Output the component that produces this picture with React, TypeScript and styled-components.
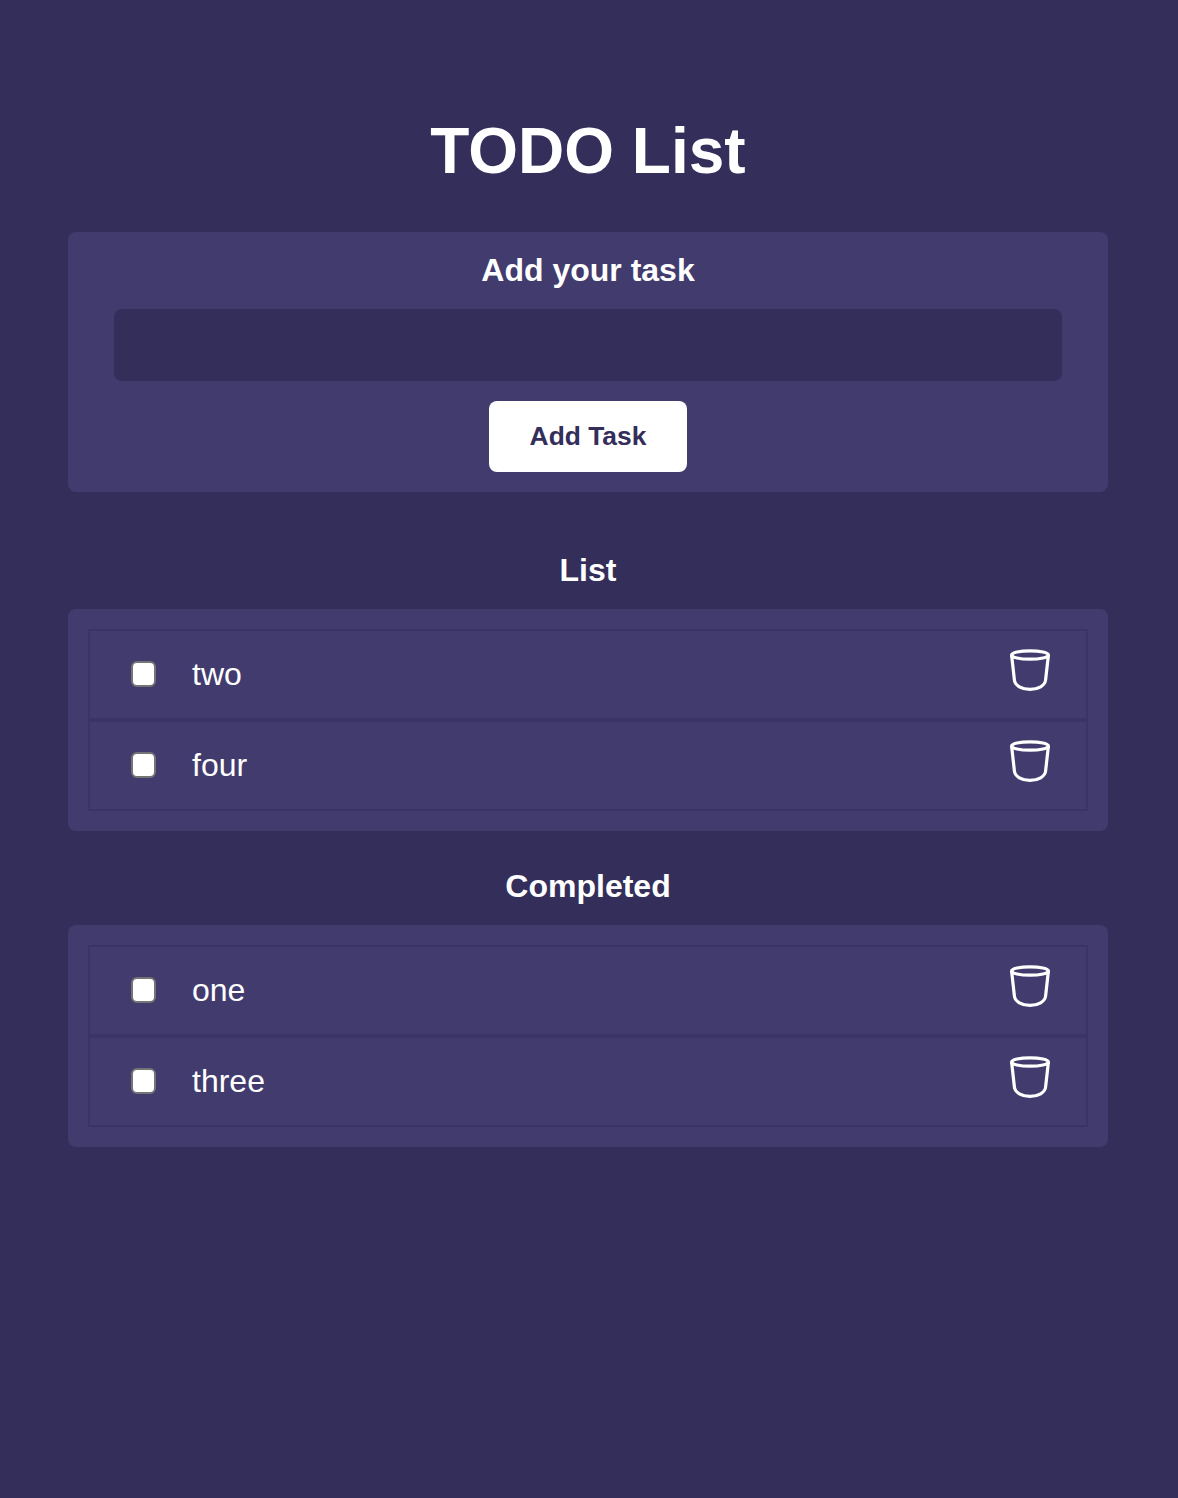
import React, { FC } from "react";
import styled, { createGlobalStyle } from "styled-components";

const GlobalStyle = createGlobalStyle`
  html, body {
    margin: 0;
    padding: 0;
    background: #342e5a;
  }
  body {
    font-family: "Liberation Sans", Arial, sans-serif;
    color: #fff;
  }
`;

const Page = styled.div`
  box-sizing: border-box;
  min-height: 1498px;
  width: 1176px;
  padding: 115px 68px 0;
`;

const Title = styled.h1`
  margin: 0 0 44px;
  height: 73px;
  line-height: 73px;
  font-size: 64px;
  font-weight: 700;
  text-align: center;
`;

const Card = styled.div`
  background: #423b6e;
  border-radius: 8px;
`;

const FormCard = styled(Card)`
  display: flex;
  flex-direction: column;
  align-items: center;
  padding: 20px 46px;
  margin-bottom: 60px;
`;

const FormTitle = styled.h2`
  margin: 0 0 20px;
  line-height: 37px;
  font-size: 32px;
  font-weight: 700;
`;

const TaskInput = styled.input`
  box-sizing: border-box;
  display: block;
  width: 100%;
  height: 72px;
  margin-bottom: 20px;
  border: 0;
  border-radius: 8px;
  background: #342e5a;
  color: #fff;
  outline: none;
`;

const AddButton = styled.button`
  width: 198px;
  height: 71px;
  padding: 0;
  border: 0;
  border-radius: 8px;
  background: #fff;
  color: #342e5a;
  font-family: inherit;
  font-size: 26.4px;
  font-weight: 700;
`;

const SectionTitle = styled.h3`
  margin: 0 0 20px;
  line-height: 37px;
  font-size: 32px;
  font-weight: 700;
  text-align: center;
`;

const ListCard = styled(Card)`
  padding: 20px;
  margin-bottom: 37px;
`;

const Row = styled.div`
  box-sizing: border-box;
  display: flex;
  align-items: center;
  height: 91px;
  padding: 0 36px 0 40.5px;
  border: 2px solid #3b3464;
`;

const Check = styled.input`
  appearance: none;
  box-sizing: border-box;
  width: 25.5px;
  height: 26px;
  margin: -1px 36px 0 0;
  flex: none;
  background: #fff;
  border: 2.5px solid #747474;
  border-radius: 6px;
`;

const Label = styled.span`
  flex: 1;
  font-size: 32px;
  line-height: 37px;
`;

const Trash = styled.button`
  display: flex;
  width: 40px;
  height: 42px;
  margin-top: -9px;
  padding: 0;
  border: 0;
  background: none;
  color: #fff;
`;

const BinIcon: FC = () => (
  <svg width="40" height="42" viewBox="0 0 40 42" fill="none" stroke="currentColor" strokeWidth="3.2" strokeLinejoin="round">
    <ellipse cx="20" cy="6" rx="18.4" ry="4.2" />
    <path d="M1.6 6 L4.4 31 C4.8 36.5 12 40.4 20 40.4 C28 40.4 35.2 36.5 35.6 31 L38.4 6" />
  </svg>
);

const TaskRow: FC<{ label: string }> = ({ label }) => (
  <Row>
    <Check type="checkbox" />
    <Label>{label}</Label>
    <Trash aria-label="delete">
      <BinIcon />
    </Trash>
  </Row>
);

export default function App() {
  return (
    <Page>
      <GlobalStyle />
      <Title>TODO List</Title>
      <FormCard>
        <FormTitle>Add your task</FormTitle>
        <TaskInput type="text" />
        <AddButton>Add Task</AddButton>
      </FormCard>
      <SectionTitle>List</SectionTitle>
      <ListCard>
        <TaskRow label="two" />
        <TaskRow label="four" />
      </ListCard>
      <SectionTitle>Completed</SectionTitle>
      <ListCard>
        <TaskRow label="one" />
        <TaskRow label="three" />
      </ListCard>
    </Page>
  );
}
